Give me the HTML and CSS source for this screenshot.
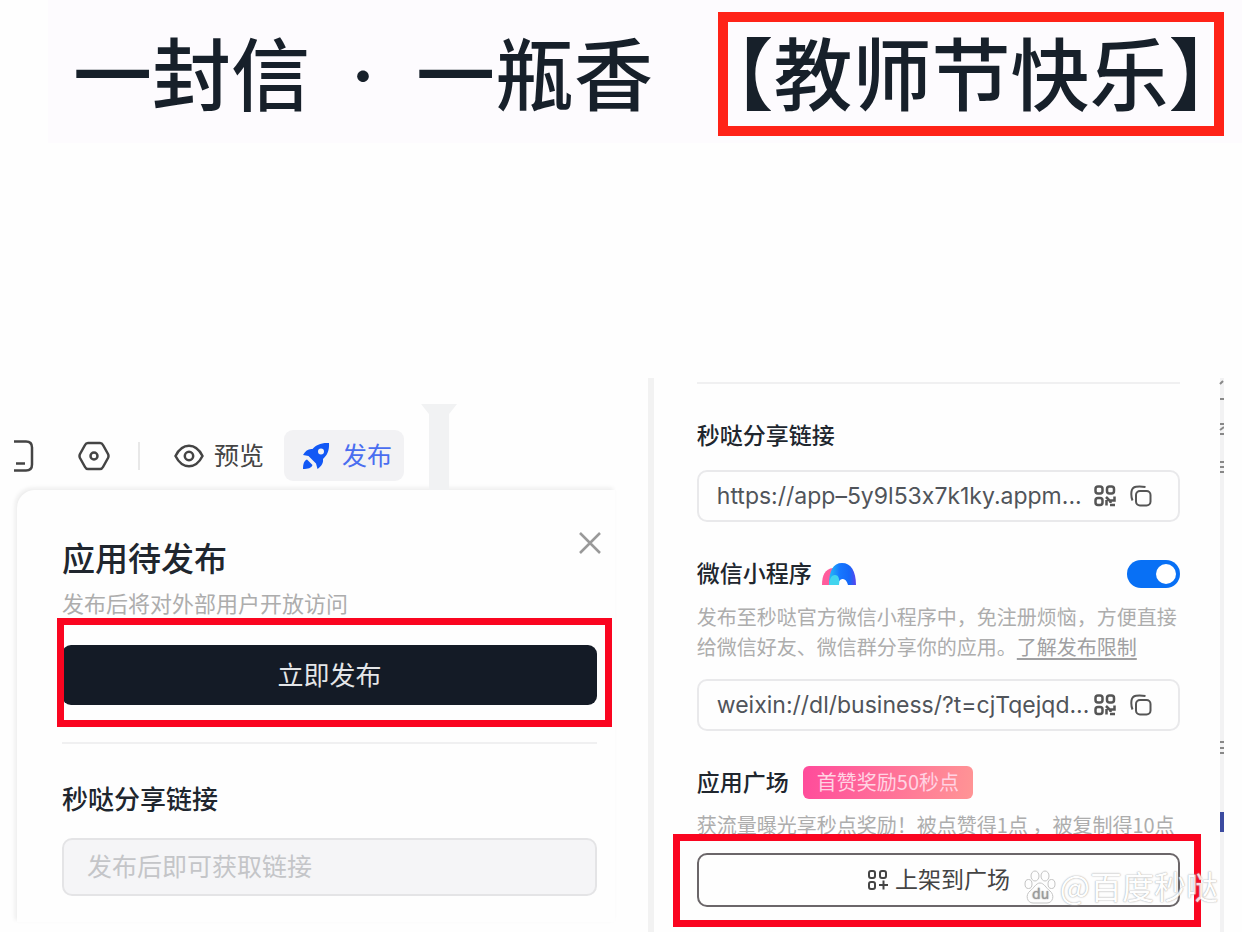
FILE: index.html
```html
<!DOCTYPE html>
<html lang="zh-CN">
  <head>
    <meta charset="utf-8">
    <title>一封信 · 一瓶香</title>
    <link rel="stylesheet" href="styles.css">
  </head>
  <body>
    <svg class="sprite" aria-hidden="true">
      <symbol id="qr" viewBox="0 0 22 22">
        <g fill="none" stroke="currentColor" stroke-width="2.500">
          <rect x="1.500" y="1.500" width="7" height="7" rx="2.500"/>
          <rect x="13" y="1.500" width="7" height="7" rx="2.500"/>
          <rect x="1.500" y="13" width="7" height="7" rx="2.500"/>
          <path d="M12 12l4 4M20.500 11.500v4h-4v2.500M12.500 15v5.500M16 20h5"/>
        </g>
      </symbol>
      <symbol id="copy" viewBox="0 0 22 22">
        <g fill="none" stroke="currentColor" stroke-width="2">
          <rect x="6" y="6" width="14.500" height="14.500" rx="4"/>
          <path d="M2.500 15.500C1 12 1.300 8 1.500 6.500C2 3 3.500 2 6 1.700C9 1.300 12 1.400 15.500 2"/>
        </g>
      </symbol>
    </svg>

    <header class="banner">
      <h1 class="banner-title">一封信<span class="dot">·</span>一瓶香</h1>
      <strong class="banner-tag">【教师节快乐】</strong>
    </header>

    <main class="columns">
      <section class="left">
        <nav class="toolbar">
          <button class="icon-btn device" aria-label="设备">
            <svg width="20" height="34" viewBox="0 0 20 34" fill="none" stroke="#444" stroke-width="2.500">
              <path d="M0 2.500h12q6 0 6 6v17q0 6-6 6H0M2 24.500h9"/>
            </svg>
          </button>
          <button class="icon-btn settings" aria-label="设置">
            <svg width="32" height="30" viewBox="0 0 32 30" fill="none" stroke="#444" stroke-width="2.500" stroke-linejoin="round">
              <path d="M10 2h12q2 0 3 2l5 9q1 2 0 4l-5 9q-1 2-3 2H10q-2 0-3-2l-5-9q-1-2 0-4l5-9q1-2 3-2z"/>
              <circle cx="16" cy="15" r="3.500"/>
            </svg>
          </button>
          <span class="split"></span>
          <button class="preview">
            <svg width="30" height="24" viewBox="0 0 30 24" fill="none" stroke="#444" stroke-width="2.500">
              <path d="M1.500 12C5 5 10 1.800 15 1.800S25 5 28.500 12C25 19 20 22.200 15 22.200S5 19 1.500 12z"/>
              <circle cx="15" cy="12" r="4.200"/>
            </svg>
            <span class="btn-text">预览</span>
          </button>
          <button class="publish">
            <svg width="28" height="28" viewBox="0 0 28 28" fill="#1258f5">
              <path fill-rule="evenodd" d="M27 1C19 .5 14 3 10.500 7C6.500 6.500 3.500 8.500 1 13L6.500 14L14 21.500L15.500 27C19.500 24 21.500 21.500 21 17C25 13.500 27.500 8.500 27 1zM19 6.500a3 3 0 1 1 0 6a3 3 0 1 1 0-6z"/>
              <path d="M5 17.500C2 18.500 1 22 1 27C6 27 9.500 26 10.500 23z"/>
            </svg>
            <span class="btn-text">发布</span>
          </button>
          <span class="gutter"></span>
        </nav>

        <div class="panel">
          <div class="panel-head">
            <h2>应用待发布</h2>
            <button class="close" aria-label="关闭">
              <svg width="24" height="24" viewBox="0 0 24 24" stroke="#999" stroke-width="2.500">
                <path d="M2 2l20 20M22 2L2 22"/>
              </svg>
            </button>
          </div>
          <p class="sub">发布后将对外部用户开放访问</p>
          <div class="publish-now">
            <button class="primary"><span class="btn-text">立即发布</span></button>
            <span class="mark"></span>
          </div>
          <hr>
          <label class="share-label" for="share">秒哒分享链接</label>
          <input class="share-input" id="share" type="text" placeholder="发布后即可获取链接" disabled>
        </div>
      </section>

      <section class="right">
        <hr>
        <label class="label" for="link">秒哒分享链接</label>
        <div class="field">
          <input id="link" type="text" value="https://app–5y9l53x7k1ky.appm..." readonly>
          <button aria-label="二维码"><svg><use href="#qr"/></svg></button>
          <button aria-label="复制"><svg><use href="#copy"/></svg></button>
        </div>

        <div class="row">
          <label class="label" for="mini">微信小程序</label>
          <svg class="rainbow" width="34" height="23" viewBox="0 0 34 23">
            <defs>
              <linearGradient id="arch" x1="0" x2="1">
                <stop offset="0" stop-color="#25bdf5"/>
                <stop offset=".4" stop-color="#1677ff"/>
                <stop offset=".75" stop-color="#1468f8"/>
                <stop offset="1" stop-color="#5b45ee"/>
              </linearGradient>
            </defs>
            <path fill="#ff5c9c" d="M0 22C0 12 3 6 11 5L14 12L8 22z"/>
            <path fill="url(#arch)" d="M7 22C7 8 11 0 20 0C29 0 34 8 34 22H26C25 18 23 16 21 16C18 16 17 18 16 22z"/>
            <path fill="#42d4ee" d="M7 22C7 17 9 12 13 12C16 12 18 15 17 22z"/>
          </svg>
          <input class="switch" id="mini" type="checkbox" checked>
        </div>
        <p class="desc">发布至秒哒官方微信小程序中，免注册烦恼，方便直接给微信好友、微信群分享你的应用。<a href="#">了解发布限制</a></p>
        <div class="field">
          <input type="text" aria-label="小程序链接" value="weixin://dl/business/?t=cjTqejqd..." readonly>
          <button aria-label="二维码"><svg><use href="#qr"/></svg></button>
          <button aria-label="复制"><svg><use href="#copy"/></svg></button>
        </div>

        <div class="row square">
          <h3 class="label">应用广场</h3>
          <span class="badge">首赞奖励50秒点</span>
        </div>
        <p class="desc">获流量曝光享秒点奖励！被点赞得1点 ，被复制得10点</p>
        <div class="list-it">
          <button class="outline">
            <svg width="22" height="22" viewBox="0 0 22 22" fill="none" stroke="currentColor" stroke-width="2">
              <rect x="2" y="2" width="6" height="7" rx="2"/>
              <rect x="13" y="2" width="6" height="7" rx="2"/>
              <rect x="2" y="13" width="6" height="7" rx="2"/>
              <path d="M16.500 11.500v9M12 16h9"/>
            </svg>
            <span class="btn-text">上架到广场</span>
          </button>
          <span class="mark"></span>
          <div class="watermark">
            <svg width="32" height="34" viewBox="0 0 32 34" fill="#fff" stroke="#bbb">
              <ellipse cx="4.500" cy="14" rx="3.500" ry="4.500"/>
              <ellipse cx="11" cy="6" rx="4" ry="5"/>
              <ellipse cx="21" cy="6" rx="4" ry="5"/>
              <ellipse cx="27.500" cy="14" rx="3.500" ry="4.500"/>
              <path d="M16 13C20 13 22 18 26 21C31 25 29 33 23 33H9C3 33 1 25 6 21C10 18 12 13 16 13z"/>
              <text x="8" y="29" fill="#888" stroke="none" font-size="14">du</text>
            </svg>
            <span class="btn-text">@百度秒哒</span>
          </div>
        </div>
        <svg class="edge" width="5" height="554" viewBox="0 0 5 554" fill="none" stroke="#888" stroke-width="2">
          <path d="M1 6l3-3M1 21h4M1 46h4M1 52l4-3M1 56h4M1 84h4M1 89h4M1 94h4M1 364h4M1 370h4M1 375h4"/>
          <path stroke="#3c4ba0" stroke-width="4" d="M3 434v20"/>
        </svg>
      </section>
    </main>
  </body>
</html>
```
FILE: styles.css
```css
* {
  box-sizing: border-box;
}

body {
  margin: 0;
  background: #fefefe;
  color: #20262e;
  font-family: "Noto Sans CJK SC", sans-serif;
}

h1, h2, h3, p {
  margin: 0;
  font-weight: 500;
}

hr {
  height: 2px;
  margin: 0;
  border: 0;
  background: #f0f0f1;
}

button, input {
  font-family: inherit;
}

button {
  display: flex;
  align-items: center;
  padding: 0;
  border: 0;
  background: none;
  color: inherit;
}

.btn-text {
  padding-bottom: 4px;
}

.sprite {
  position: absolute;
  width: 0;
  height: 0;
}

/* banner */
.banner {
  display: flex;
  justify-content: space-between;
  align-items: center;
  margin-left: 48px;
  padding: 12px 18px 7px 25px;
  background: #fdfbfe;
  color: #17202a;
  font-size: 79px;
  line-height: 98px;
  white-space: nowrap;
}

.banner-title {
  padding-bottom: 6px;
  font-size: 79px;
}

.dot {
  display: inline-block;
  width: 106px;
  font-size: 50px;
  text-align: center;
  vertical-align: 10px;
  line-height: 50px;
}

.banner-tag {
  padding: 0 6px 6px;
  border: 10px solid #ff2318;
  font-weight: 500;
  font-feature-settings: "halt";
}

.columns {
  display: grid;
  grid-template-columns: 11fr 10fr;
  margin: 235px 18px 0 14px;
}

/* left side */
.left {
  padding: 26px 33px 0 0;
}

.toolbar {
  display: flex;
  align-items: center;
  padding: 26px 0 9px;
  color: #444;
}

.toolbar button {
  font-size: 25px;
  line-height: 36px;
}

.settings {
  margin-left: 44px;
}

.split {
  width: 2px;
  height: 28px;
  margin: 0 34px 0 28px;
  background: #e8e8e8;
}

.preview {
  gap: 10px;
}

.toolbar .publish {
  gap: 12px;
  height: 51px;
  margin-left: 20px;
  padding: 0 12px 0 18px;
  border-radius: 9px;
  background: #f2f2f4;
  color: #4a6ef0;
}

.gutter {
  align-self: stretch;
  width: 36px;
  margin: -26px 0 -9px 17px;
  background: #f1f2f3;
  clip-path: polygon(0 0, 100% 0, 78% 10px, 78% 100%, 22% 100%, 22% 10px);
}

.panel {
  margin-left: 3px;
  padding: 49px 18px 26px 45px;
  border-top-left-radius: 18px;
  background: #fefefe;
  box-shadow: -2px -2px 4px #ececec;
}

.panel-head {
  display: flex;
  justify-content: space-between;
}

.panel-head h2 {
  font-size: 33px;
  line-height: 36px;
}

.close {
  align-self: flex-start;
  margin: -8px -5px 0 0;
}

.sub {
  margin: 12px 0 28px;
  color: #adadad;
  font-size: 22px;
  font-weight: 400;
  line-height: 30px;
}

.publish-now, .list-it {
  position: relative;
}

.publish-now {
  margin-bottom: 37px;
}

.primary {
  justify-content: center;
  width: 100%;
  height: 60px;
  border-radius: 9px;
  background: #141b26;
  color: #e4e6e8;
  font-size: 26px;
}

.mark {
  position: absolute;
  border: 7px solid #fa0520;
  pointer-events: none;
}

.publish-now .mark {
  inset: -27px -15px -22px -5px;
}

.share-label {
  display: block;
  margin: 38px 0 24px;
  font-size: 26px;
  font-weight: 500;
  line-height: 32px;
}

.share-input {
  display: block;
  width: 100%;
  height: 58px;
  padding: 0 23px 4px;
  border: 2px solid #e4e4e6;
  border-radius: 10px;
  background: #f5f5f7;
  font-size: 25px;
}

.share-input::placeholder {
  color: #c4c5c8;
}

/* right side */
.right {
  position: relative;
  padding: 4px 40px 25px 43px;
  border-right: 4px solid #f2f2f3;
  border-left: 6px solid #f2f2f2;
}

.label {
  display: block;
  padding-bottom: 4px;
  font-size: 23px;
  font-weight: 500;
  line-height: 28px;
}

.right > .label {
  margin: 36px 0 18px;
}

.field {
  display: flex;
  align-items: center;
  gap: 14px;
  height: 52px;
  padding: 0 26px 0 18px;
  border: 2px solid #e9e9eb;
  border-radius: 10px;
  color: #555;
}

.field input {
  flex: 1;
  min-width: 0;
  margin-right: -8px;
  padding: 0;
  border: 0;
  outline: 0;
  background: none;
  color: #50545a;
  font-family: Inter, sans-serif;
  font-size: 23px;
  font-variant-ligatures: no-contextual;
}

.field svg {
  width: 22px;
  height: 22px;
}

.row {
  display: flex;
  align-items: center;
  margin: 36px 0 12px;
}

.rainbow {
  margin-left: 10px;
}

.switch {
  appearance: none;
  display: flex;
  justify-content: flex-end;
  width: 53px;
  height: 28px;
  margin: 0 0 0 auto;
  padding: 4px;
  border-radius: 14px;
  background: #0870f5;
}

.switch::before {
  content: "";
  width: 20px;
  height: 20px;
  border-radius: 50%;
  background: #fff;
}

.desc {
  margin-bottom: 17px;
  color: #adadad;
  font-size: 20px;
  font-weight: 400;
  line-height: 30px;
}

.desc a {
  color: #a0a0a2;
  text-underline-offset: 3px;
}

.square {
  gap: 14px;
  margin: 35px 0 11px;
}

.badge {
  padding: 0 14px 2px;
  border-radius: 6px;
  background: linear-gradient(100deg, #ff4b9b, #ff9595);
  color: #ffd3e3;
  font-size: 20px;
  line-height: 31px;
}

.list-it {
  margin-top: -4px;
}

.outline {
  justify-content: center;
  gap: 6px;
  width: 100%;
  height: 54px;
  border: 2px solid #6b6669;
  border-radius: 10px;
  color: #444;
  font-size: 23px;
}

.list-it .mark {
  inset: -19px -21px -20px -24px;
}

.watermark {
  position: absolute;
  right: -38px;
  bottom: 0;
  display: flex;
  align-items: center;
  gap: 4px;
  color: #fff;
  font-size: 32px;
  line-height: 36px;
  opacity: .85;
  white-space: nowrap;
  text-shadow: 0 0 1px #999, 0 0 2px #bbb;
}

.edge {
  position: absolute;
  top: 0;
  right: -4px;
}
```
